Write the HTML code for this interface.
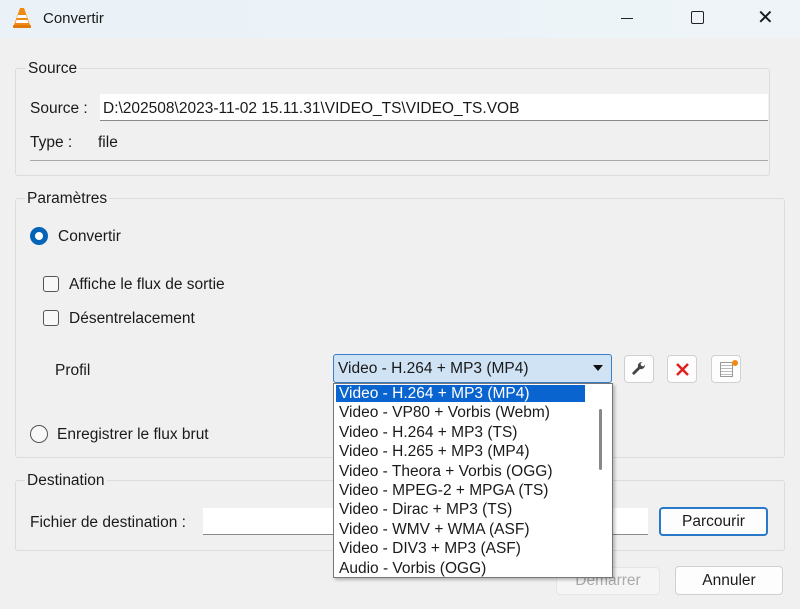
<!DOCTYPE html>
<html><head><style>
*{box-sizing:border-box;margin:0;padding:0}
body{width:800px;height:609px;overflow:hidden;background:#f0f0f0;font-family:"Liberation Sans",sans-serif;font-size:15.5px;color:#1a1a1a;position:relative}
.a{position:absolute;white-space:nowrap}
.title{left:0;top:0;width:800px;height:38px;background:linear-gradient(90deg,#eaf2f7,#eef4f8)}
.grp{position:absolute;border:1px solid #dcdcdc;border-radius:3px}
.lg{position:absolute;background:#f0f0f0;padding:0 2px}
.inp{position:absolute;background:#fff;border-bottom:1px solid #8a8a8a}
.btn{position:absolute;background:#fdfdfd;border:1px solid #d0d0d0;border-radius:4px;text-align:center}
.cb{position:absolute;width:16px;height:16px;border:1px solid #555;border-radius:3px;background:#f8f8f8}
.it{position:absolute;left:5px;height:19.4px;line-height:19px}
</style></head><body>
<div class="a title"></div>
<svg class="a" style="left:12px;top:7px" width="20" height="22" viewBox="0 0 20 22"><path d="M8 1h4l6 17H2z" fill="#f08a12"/><path d="M6 8h8l1 3H5zM4.5 13h11l1 3h-13z" fill="#fff"/><rect x="1" y="18" width="18" height="3" rx="1" fill="#e07808"/></svg>
<div class="a" style="left:43px;top:10px;font-size:15px">Convertir</div>
<div class="a" style="left:621px;top:18px;width:12px;height:1px;background:#222"></div>
<div class="a" style="left:691px;top:11px;width:13px;height:13px;border:1.5px solid #222;border-radius:2px"></div>
<div class="a" style="left:757px;top:5px;font-size:20px">✕</div>

<div class="grp" style="left:15px;top:68px;width:755px;height:108px"></div>
<div class="lg a" style="left:26px;top:60px">Source</div>
<div class="a" style="left:30px;top:100px">Source :</div>
<div class="inp" style="left:100px;top:94px;width:668px;height:27px"></div>
<div class="a" style="left:103px;top:100px">D:\202508\2023-11-02 15.11.31\VIDEO_TS\VIDEO_TS.VOB</div>
<div class="a" style="left:30px;top:134px">Type :</div>
<div class="a" style="left:98px;top:134px">file</div>
<div class="a" style="left:30px;top:160px;width:738px;height:1px;background:#a8a8a8"></div>

<div class="grp" style="left:15px;top:198px;width:770px;height:260px"></div>
<div class="lg a" style="left:25px;top:190px">Paramètres</div>
<div class="a" style="left:30px;top:227px;width:18px;height:18px;border-radius:50%;background:#0563b8"><div class="a" style="left:5px;top:5px;width:8px;height:8px;border-radius:50%;background:#fff"></div></div>
<div class="a" style="left:58px;top:228px">Convertir</div>
<div class="cb" style="left:43px;top:276px"></div>
<div class="a" style="left:69px;top:276px">Affiche le flux de sortie</div>
<div class="cb" style="left:43px;top:310px"></div>
<div class="a" style="left:69px;top:310px">Désentrelacement</div>
<div class="a" style="left:55px;top:362px">Profil</div>
<div class="a" style="left:30px;top:425px;width:18px;height:18px;border-radius:50%;border:1px solid #555;background:#f8f8f8"></div>
<div class="a" style="left:57px;top:426px">Enregistrer le flux brut</div>

<div class="grp" style="left:15px;top:480px;width:770px;height:71px"></div>
<div class="lg a" style="left:25px;top:472px">Destination</div>
<div class="a" style="left:30px;top:514px">Fichier de destination :</div>
<div class="inp" style="left:203px;top:508px;width:445px;height:27px"></div>
<div class="btn" style="left:659px;top:507px;width:109px;height:29px;border:2px solid #2a78c8;line-height:25px">Parcourir</div>
<div class="btn" style="left:556px;top:567px;width:104px;height:28px;line-height:26px;color:#aaa;background:#f5f5f5;border-color:#e5e5e5">Démarrer</div>
<div class="btn" style="left:675px;top:566px;width:108px;height:29px;line-height:27px">Annuler</div>

<div class="btn" style="left:624px;top:355px;width:30px;height:28px"><svg class="a" style="left:6px;top:5px" width="17" height="17" viewBox="0 0 17 17"><path d="M11 1a4 4 0 0 0-4 5L1.5 11.5a1.5 1.5 0 0 0 2 2L9 8a4 4 0 0 0 5-4l-2 1.5-2-1L9.5 3z" fill="#444"/></svg></div>
<div class="btn" style="left:667px;top:355px;width:30px;height:28px"><svg class="a" style="left:7px;top:6px" width="15" height="15" viewBox="0 0 15 15"><path d="M2 2l11 11M13 2L2 13" stroke="#e02020" stroke-width="2.5"/></svg></div>
<div class="btn" style="left:711px;top:355px;width:30px;height:28px"><div class="a" style="left:8px;top:6px;width:13px;height:15px;border:1px solid #999;background:repeating-linear-gradient(#fff 0 2px,#bbb 2px 3px)"></div><div class="a" style="left:20px;top:4px;width:6px;height:6px;border-radius:50%;background:#f08a12"></div></div>

<div class="a" style="left:333px;top:354px;width:279px;height:29px;background:#cfe3f5;border:1px solid #3a80c8;border-radius:3px"></div>
<div class="a" style="left:338px;top:360px">Video - H.264 + MP3 (MP4)</div>
<svg class="a" style="left:592px;top:364px" width="12" height="8" viewBox="0 0 12 8"><path d="M1 1h10L6 7z" fill="#111"/></svg>
<div class="a" style="left:333px;top:383px;width:280px;height:195px;background:#fff;border:1px solid #777;box-shadow:2px 2px 3px rgba(0,0,0,.25)">
<div class="a" style="left:2px;top:1px;width:249px;height:17px;background:#0a64d0"></div>
<div class="it" style="top:0;color:#fff">Video - H.264 + MP3 (MP4)</div>
<div class="it" style="top:19.4px">Video - VP80 + Vorbis (Webm)</div>
<div class="it" style="top:38.8px">Video - H.264 + MP3 (TS)</div>
<div class="it" style="top:58.2px">Video - H.265 + MP3 (MP4)</div>
<div class="it" style="top:77.6px">Video - Theora + Vorbis (OGG)</div>
<div class="it" style="top:97px">Video - MPEG-2 + MPGA (TS)</div>
<div class="it" style="top:116.4px">Video - Dirac + MP3 (TS)</div>
<div class="it" style="top:135.8px">Video - WMV + WMA (ASF)</div>
<div class="it" style="top:155.2px">Video - DIV3 + MP3 (ASF)</div>
<div class="it" style="top:174.6px">Audio - Vorbis (OGG)</div>
<div class="a" style="left:265px;top:25px;width:3px;height:61px;background:#888;border-radius:2px"></div>
</div>
</body></html>
